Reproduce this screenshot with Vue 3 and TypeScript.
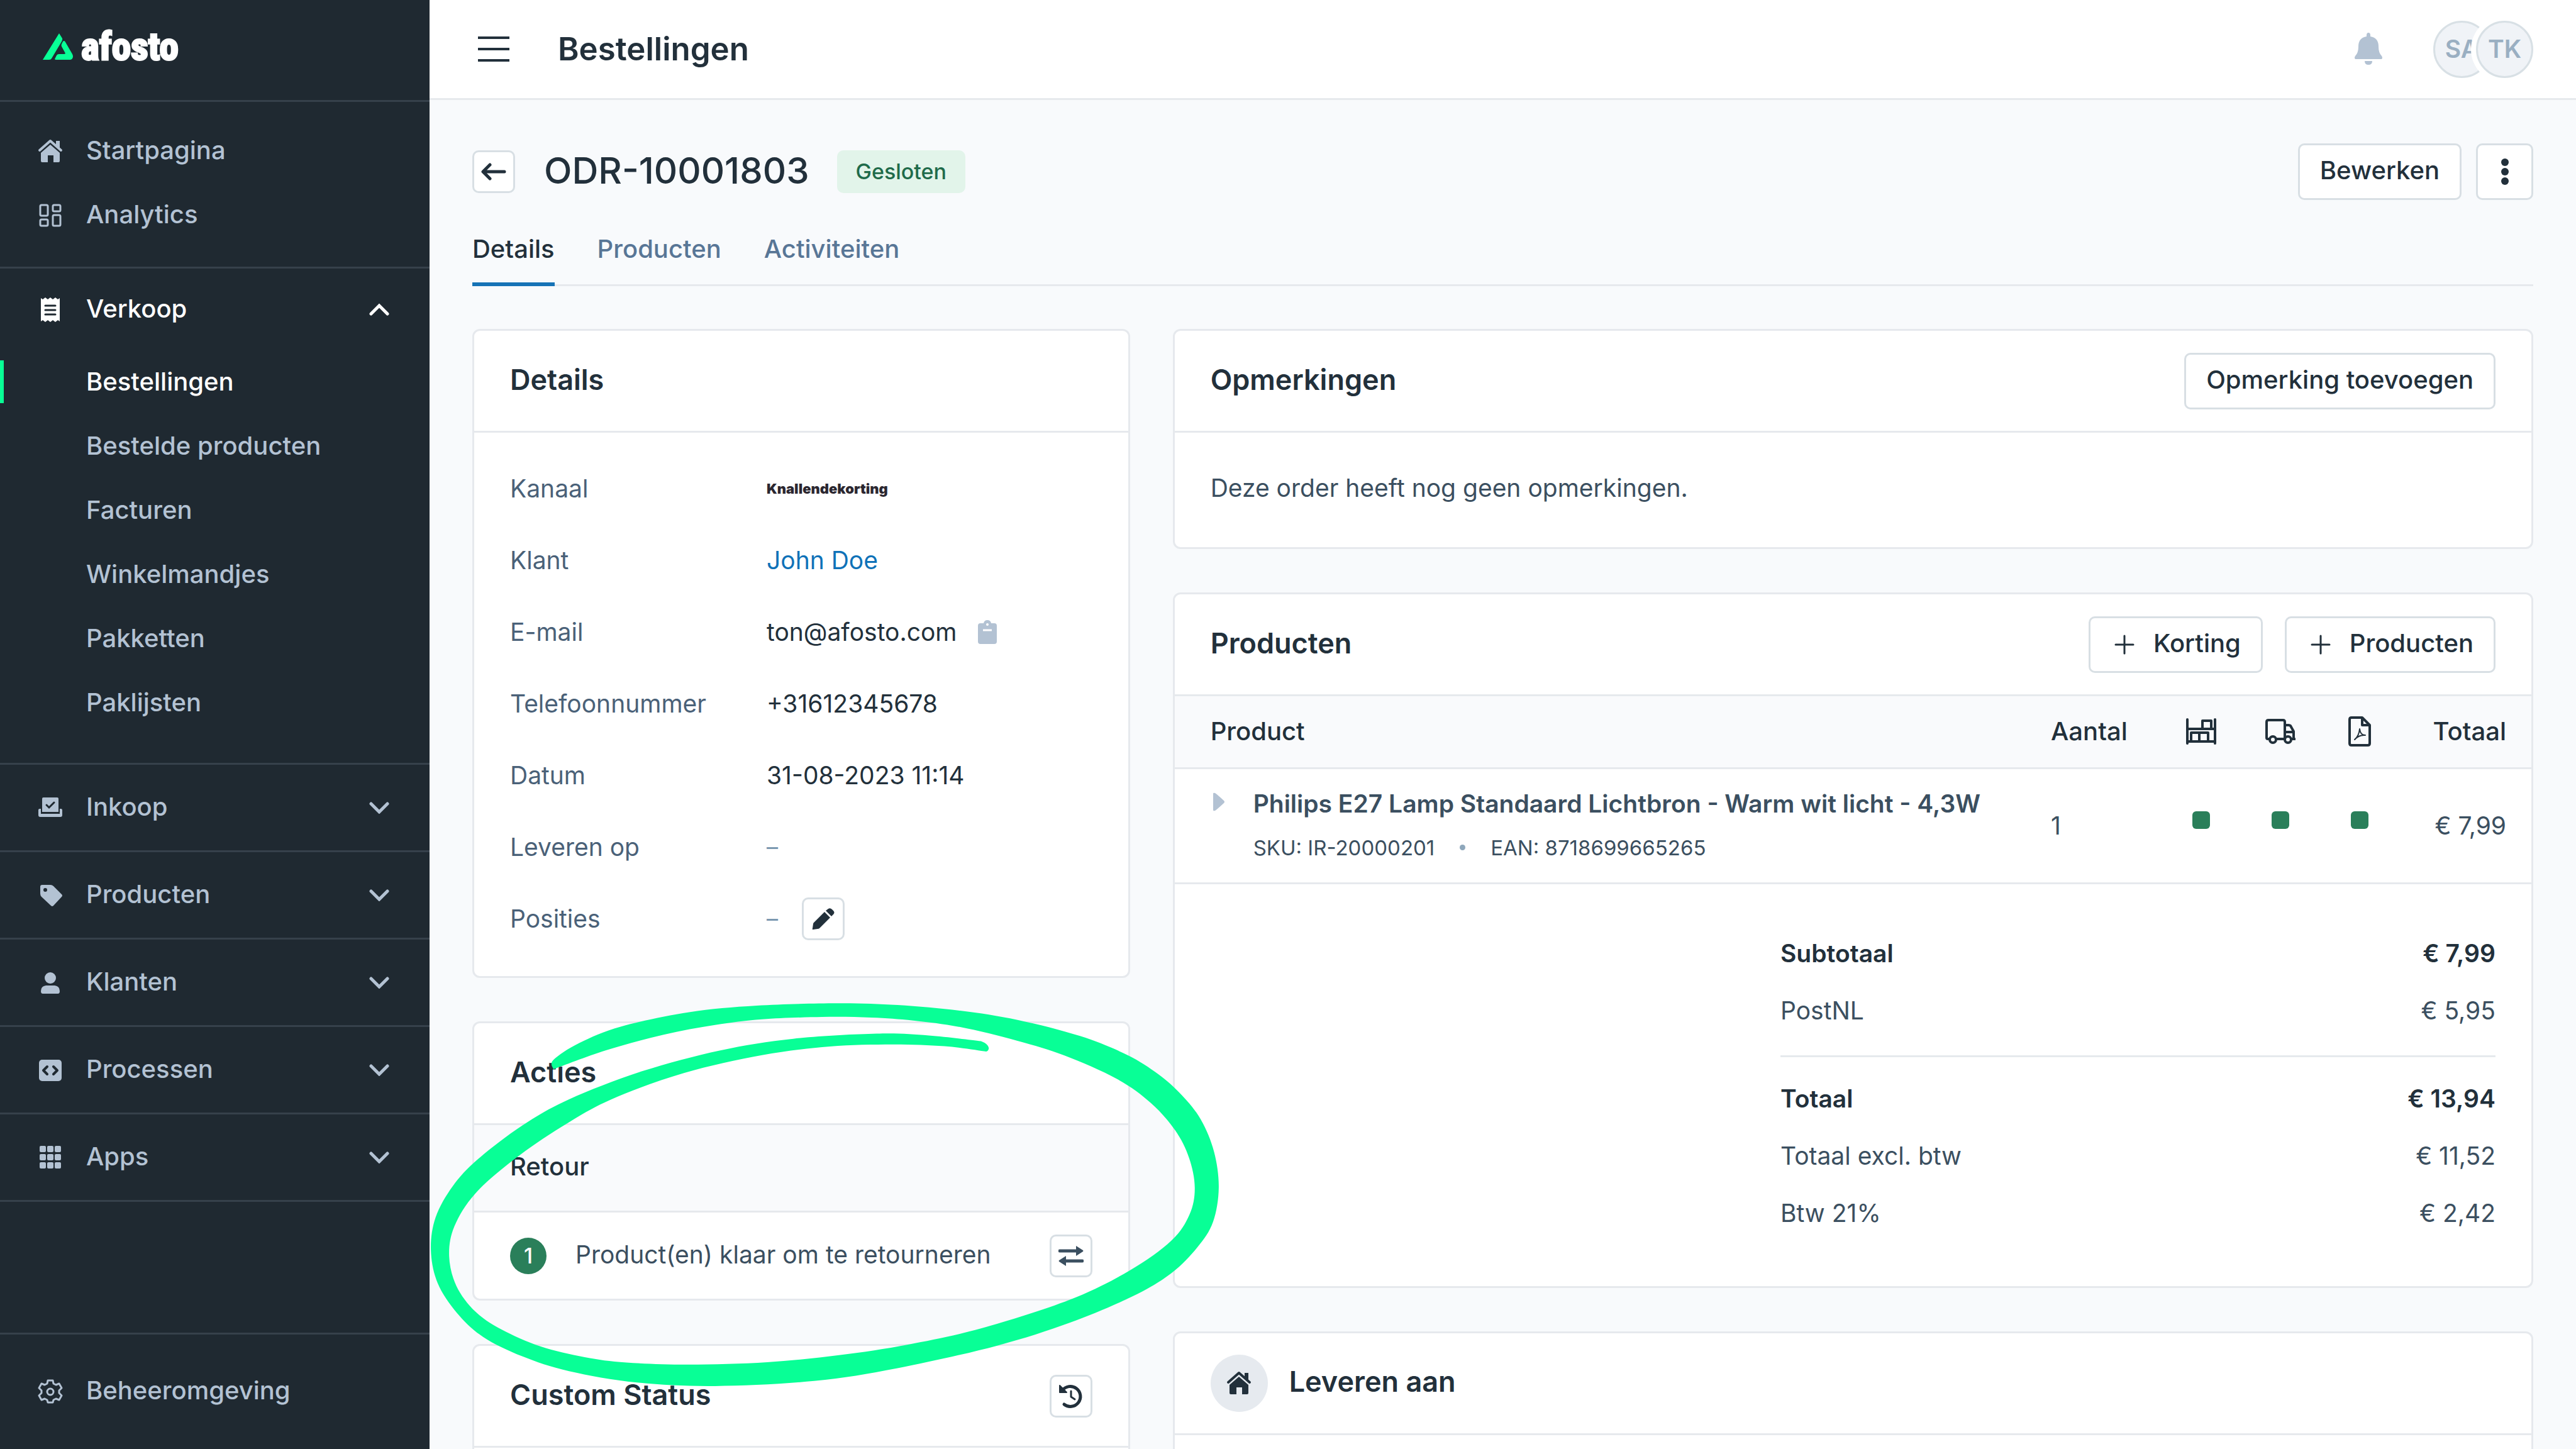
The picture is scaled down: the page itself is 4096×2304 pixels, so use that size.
<script setup lang="ts">
type Point = [number, number]

interface SubItem { label: string; active?: boolean }
interface Group { label: string; icon: string }
interface TotalRow { label: string; amount: string; strong?: boolean }

const salesItems: SubItem[] = [
  { label: 'Bestellingen', active: true },
  { label: 'Bestelde producten' },
  { label: 'Facturen' },
  { label: 'Winkelmandjes' },
  { label: 'Pakketten' },
  { label: 'Paklijsten' },
]

const groups: Group[] = [
  { label: 'Inkoop', icon: 'laptop' },
  { label: 'Producten', icon: 'tag' },
  { label: 'Klanten', icon: 'user' },
  { label: 'Processen', icon: 'code' },
  { label: 'Apps', icon: 'grid' },
]

const subtotals: TotalRow[] = [
  { label: 'Subtotaal', amount: '€ 7,99', strong: true },
  { label: 'PostNL', amount: '€ 5,95' },
]

const totals: TotalRow[] = [
  { label: 'Totaal', amount: '€ 13,94', strong: true },
  { label: 'Totaal excl. btw', amount: '€ 11,52' },
  { label: 'Btw 21%', amount: '€ 2,42' },
]

const gridCells: Point[] = [0, 1, 2].flatMap((r) => [0, 1, 2].map((c): Point => [3 + c * 12, 2 + r * 13]))

// Both edges of the hand-drawn marker stroke around the returns card.
const outerEdge: Point[] = [
  [240, 293], [240, 262], [290, 205], [370, 150], [500, 102], [630, 80], [785, 72], [900, 78], [1020, 97],
  [1130, 128], [1250, 182], [1340, 245], [1400, 310], [1445, 380], [1482, 463], [1507, 570], [1516, 690],
  [1505, 805], [1475, 890], [1425, 977], [1350, 1055], [1230, 1143], [1090, 1220], [900, 1295], [740, 1338],
  [550, 1355], [400, 1343], [270, 1305], [180, 1255], [105, 1190], [55, 1110], [18, 1010], [5, 900],
  [14, 790], [47, 685], [95, 595], [180, 482], [270, 394], [410, 300], [560, 230], [700, 191], [860, 174],
  [960, 180], [1060, 199],
]
const innerEdge: Point[] = [
  [1070, 234], [990, 216], [890, 210], [770, 217], [640, 246], [490, 306], [350, 395], [255, 487],
  [165, 595], [90, 710], [50, 820], [40, 920], [54, 1020], [90, 1105], [140, 1165], [215, 1222],
  [300, 1258], [380, 1276], [500, 1283], [650, 1275], [790, 1251], [920, 1216], [1060, 1162],
  [1230, 1066], [1345, 968], [1425, 868], [1460, 780], [1470, 690], [1459, 590], [1432, 497],
  [1385, 405], [1320, 325], [1220, 247], [1130, 198], [1020, 152], [930, 130], [850, 120], [755, 118],
  [640, 126], [550, 145], [450, 178], [340, 230], [240, 293],
]

function smooth(points: Point[]): string {
  let d = ''
  for (let i = 0; i < points.length - 1; i++) {
    const p0 = points[i - 1] ?? points[i]
    const p1 = points[i]
    const p2 = points[i + 1]
    const p3 = points[i + 2] ?? p2
    d += `C${p1[0] + (p2[0] - p0[0]) / 6} ${p1[1] + (p2[1] - p0[1]) / 6} `
    d += `${p2[0] - (p3[0] - p1[0]) / 6} ${p2[1] - (p3[1] - p1[1]) / 6} ${p2[0]} ${p2[1]}`
  }
  return d
}

const markerPath = `M240 293${smooth(outerEdge)}Q1074 208 1075 222Q1075 232 1070 234${smooth(innerEdge)}Z`
</script>

<template>
  <div class="shell">
    <aside class="sidebar">
      <a class="logo" href="#" aria-label="afosto">
        <svg width="50" height="44" viewBox="0 0 50 44" fill="#08ff96">
          <path d="M27 1L32 9Q33 11 31 14L15 41Q14 43 11 43H1Z" />
          <path d="M35 13Q36 13 37 15L48 34Q50 38 48 41Q47 43 43 43H22Q19 43 21 40L23 36Q24 34 27 34H35Q38 34 36 31L31 22Q30 20 31 18L33 14Q34 13 35 13Z" />
        </svg>
        <span>afosto</span>
      </a>

      <nav class="nav">
        <div class="block top">
          <a class="item" href="#">
            <svg class="icon" viewBox="0 0 40 40">
              <path d="M3 19L20 4L37 19" fill="none" stroke="currentColor" stroke-width="4" stroke-linecap="round" stroke-linejoin="round" />
              <path d="M29 4H35V16L29 11Z" fill="currentColor" />
              <path d="M20 10L35 23V36Q35 38 33 38H25V27H16V38H7Q5 38 5 36V23Z" fill="currentColor" />
            </svg>
            <span class="label">Startpagina</span>
          </a>
          <a class="item" href="#">
            <svg class="icon" viewBox="0 0 40 40" fill="none" stroke="currentColor" stroke-width="3">
              <rect x="4" y="4" width="12" height="17" rx="2" />
              <rect x="24" y="4" width="12" height="10" rx="2" />
              <rect x="4" y="27" width="12" height="10" rx="2" />
              <rect x="24" y="20" width="12" height="17" rx="2" />
            </svg>
            <span class="label">Analytics</span>
          </a>
        </div>

        <div class="block sales">
          <button class="group open" type="button" aria-expanded="true">
            <svg class="icon" viewBox="0 0 40 40">
              <path d="M5 2L8 4L12 1L16 4L20 1L24 4L28 1L32 4L35 2V39L32 37L28 40L24 37L20 40L16 37L12 40L8 37L5 39Z" fill="currentColor" />
              <path d="M12 14H28M12 21H28M12 28H28" stroke="#1f2931" stroke-width="3" stroke-linecap="round" />
            </svg>
            <span class="label">Verkoop</span>
            <svg class="chevron" viewBox="0 0 32 20"><path d="M3 17L16 4L29 17" /></svg>
          </button>
          <a v-for="item in salesItems" :key="item.label" class="sub" :class="{ active: item.active }" href="#">{{ item.label }}</a>
        </div>

        <div v-for="group in groups" :key="group.label" class="block">
          <button class="group" type="button" aria-expanded="false">
            <svg v-if="group.icon === 'laptop'" class="icon" viewBox="0 0 40 40">
              <path d="M9 4H31Q33 4 33 6V27H7V6Q7 4 9 4Z" fill="currentColor" />
              <path d="M14 16L18 20L26 12" fill="none" stroke="#1f2931" stroke-width="3" stroke-linecap="round" />
              <path d="M3 22H5V30H35V22H37Q39 22 39 24V32Q39 35 36 35H4Q1 35 1 32V24Q1 22 3 22Z" fill="currentColor" />
            </svg>
            <svg v-else-if="group.icon === 'tag'" class="icon" viewBox="0 0 40 40">
              <path fill-rule="evenodd" d="M7 4H20Q23 4 25 6L38 19Q40 21 38 23L25 37Q23 39 21 37L6 23Q4 21 4 18V7Q4 4 7 4ZM12 9A3 3 0 1 0 12 15A3 3 0 1 0 12 9Z" fill="currentColor" />
            </svg>
            <svg v-else-if="group.icon === 'user'" class="icon" viewBox="0 0 40 40" fill="currentColor">
              <circle cx="20" cy="13" r="9" />
              <path d="M13 25H27Q35 26 35 34Q35 38 32 38H8Q5 38 5 34Q5 26 13 25Z" />
            </svg>
            <svg v-else-if="group.icon === 'code'" class="icon" viewBox="0 0 40 40">
              <rect x="2" y="4" width="36" height="34" rx="5" fill="currentColor" />
              <path d="M15 15L9 21L15 27M25 15L31 21L25 27" fill="none" stroke="#1f2931" stroke-width="4" stroke-linecap="round" stroke-linejoin="round" />
            </svg>
            <svg v-else class="icon" viewBox="0 0 40 40" fill="currentColor">
              <rect v-for="(cell, i) in gridCells" :key="i" :x="cell[0]" :y="cell[1]" width="10" height="10" rx="2" />
            </svg>
            <span class="label">{{ group.label }}</span>
            <svg class="chevron" viewBox="0 0 32 20"><path d="M3 4L16 17L29 4" /></svg>
          </button>
        </div>
      </nav>

      <a class="item settings" href="#">
        <svg class="icon" viewBox="0 0 40 40" fill="none" stroke="currentColor" stroke-width="3" stroke-linejoin="round">
          <path d="M16 3H24L25 8L29 10L34 8L38 15L34 19V23L38 27L34 34L29 32L25 34L24 38H16L15 34L11 32L6 34L2 27L6 23V19L2 15L6 8L11 10L15 8Z" />
          <circle cx="20" cy="21" r="5" />
        </svg>
        <span class="label">Beheeromgeving</span>
      </a>
    </aside>

    <div class="main">
      <header class="topbar">
        <button class="menu" type="button" aria-label="Menu">
          <svg width="50" height="40" viewBox="0 0 50 40" stroke="currentColor" stroke-width="4"><path d="M0 2H50M0 20H50M0 38H50" /></svg>
        </button>
        <div class="page-title">Bestellingen</div>
        <button class="bell" type="button" aria-label="Meldingen">
          <svg width="46" height="52" viewBox="0 0 46 52" fill="currentColor">
            <path d="M23 0Q26 0 26 4V6Q39 8 39 22Q39 32 44 37Q46 40 44 42H2Q0 40 2 37Q7 32 7 22Q7 8 20 6V4Q20 0 23 0Z" />
            <path d="M17 45H29Q29 51 23 51Q17 51 17 45Z" />
          </svg>
        </button>
        <div class="avatars">
          <span class="avatar">SA</span>
          <span class="avatar front">TK</span>
        </div>
      </header>

      <main class="content">
        <div class="title-row">
          <button class="square" type="button" aria-label="Terug">
            <svg width="40" height="28" viewBox="0 0 40 28" class="line"><path d="M37 14H4M14 3L3 14L14 25" /></svg>
          </button>
          <h1>ODR-10001803</h1>
          <span class="badge">Gesloten</span>
          <div class="actions">
            <button class="btn" type="button">Bewerken</button>
            <button class="btn more" type="button" aria-label="Meer">
              <svg width="12" height="44" viewBox="0 0 12 44" fill="currentColor"><circle cx="6" cy="7" r="6" /><circle cx="6" cy="22" r="6" /><circle cx="6" cy="37" r="6" /></svg>
            </button>
          </div>
        </div>

        <nav class="tabs">
          <a class="tab current" href="#">Details</a>
          <a class="tab" href="#">Producten</a>
          <a class="tab" href="#">Activiteiten</a>
        </nav>

        <div class="columns">
          <div class="column">
            <section class="card">
              <div class="card-head"><h2>Details</h2></div>
              <dl class="facts">
                <div><dt>Kanaal</dt><dd><span class="brand">Knallendekorting</span></dd></div>
                <div><dt>Klant</dt><dd><a href="#">John Doe</a></dd></div>
                <div>
                  <dt>E-mail</dt>
                  <dd>
                    ton@afosto.com
                    <button class="copy" type="button" aria-label="Kopiëren">
                      <svg width="30" height="40" viewBox="0 0 30 40">
                        <path d="M4 6H9Q10 1 15 1Q20 1 21 6H26Q30 6 30 10V35Q30 39 26 39H4Q0 39 0 35V10Q0 6 4 6Z" fill="#b3c2d3" />
                        <circle cx="15" cy="8" r="2" fill="#fff" /><path d="M8 17H22" stroke="#fff" stroke-width="3" />
                      </svg>
                    </button>
                  </dd>
                </div>
                <div><dt>Telefoonnummer</dt><dd>+31612345678</dd></div>
                <div><dt>Datum</dt><dd>31-08-2023 11:14</dd></div>
                <div><dt>Leveren op</dt><dd><span class="none">–</span></dd></div>
                <div>
                  <dt>Posities</dt>
                  <dd>
                    <span class="none">–</span>
                    <button class="square edit" type="button" aria-label="Posities bewerken">
                      <svg width="40" height="40" viewBox="0 0 40 40" fill="currentColor">
                        <path d="M22 9L31 18L14 35Q13 36 11 36L4 37Q2 37 3 35L4 28Q4 27 5 26Z" />
                        <path d="M24 7L28 4Q31 2 34 5L36 7Q39 10 36 13L33 16Z" />
                      </svg>
                    </button>
                  </dd>
                </div>
              </dl>
            </section>

            <section class="card returns">
              <div class="card-head"><h2>Acties</h2></div>
              <h3 class="subhead">Retour</h3>
              <div class="task">
                <span class="count">1</span>
                <span class="task-text">Product(en) klaar om te retourneren</span>
                <button class="square" type="button" aria-label="Retourneren">
                  <svg width="40" height="34" viewBox="0 0 40 34">
                    <path d="M2 9H29M38 25H11" stroke="currentColor" stroke-width="5" stroke-linecap="round" />
                    <path d="M28 1L39 8Q40 9 39 10L28 17ZM12 17L1 24Q0 25 1 26L12 33Z" fill="currentColor" />
                  </svg>
                </button>
              </div>
              <svg class="marker" viewBox="0 0 1568 1568" preserveAspectRatio="none" aria-hidden="true"><path :d="markerPath" fill="#08ff96" /></svg>
            </section>

            <section class="card">
              <div class="card-head">
                <h2>Custom Status</h2>
                <button class="square" type="button" aria-label="Geschiedenis">
                  <svg width="40" height="40" viewBox="0 0 40 40" class="line">
                    <path d="M6 11A16 16 0 1 1 9 33" /><path d="M20 12V21L26 25" stroke-width="3" /><path d="M2 3V14H13Z" fill="currentColor" stroke-width="2" />
                  </svg>
                </button>
              </div>
              <div class="status-body"></div>
            </section>
          </div>

          <div class="column">
            <section class="card">
              <div class="card-head">
                <h2>Opmerkingen</h2>
                <button class="btn" type="button">Opmerking toevoegen</button>
              </div>
              <p class="empty">Deze order heeft nog geen opmerkingen.</p>
            </section>

            <section class="card">
              <div class="card-head">
                <h2>Producten</h2>
                <div class="head-buttons">
                  <button v-for="name in ['Korting', 'Producten']" :key="name" class="btn add" type="button">
                    <svg width="32" height="32" viewBox="0 0 32 32" stroke="currentColor" stroke-width="3" stroke-linecap="round"><path d="M2 16H30M16 2V30" /></svg>
                    <span>{{ name }}</span>
                  </button>
                </div>
              </div>
              <table class="lines">
                <colgroup><col /><col class="w-qty" /><col class="w-icon" /><col class="w-icon" /><col class="w-icon" /><col class="w-total" /></colgroup>
                <thead>
                  <tr>
                    <th class="first">Product</th>
                    <th>Aantal</th>
                    <th class="mid" aria-label="Magazijn">
                      <svg width="48" height="48" viewBox="0 -4 48 48" class="thin"><path d="M2 1V39M46 1V39M2 16H46M2 36H46M26 16V3H40V16M8 36V22H35V36M21 22V36" /></svg>
                    </th>
                    <th class="mid" aria-label="Verzending">
                      <svg width="48" height="48" viewBox="0 -4 48 48" class="thin">
                        <path d="M6 32H4Q2 32 2 30V5Q2 2 5 2H28Q31 2 31 5V32H18M31 10H37Q39 10 40 11L45 20V32H42M31 21H45M45 32H47" /><circle cx="12" cy="33" r="5" /><circle cx="36" cy="33" r="5" />
                      </svg>
                    </th>
                    <th class="mid" aria-label="Factuur">
                      <svg width="36" height="48" viewBox="0 0 36 48" class="thin">
                        <path d="M22 2H5Q2 2 2 5V43Q2 46 5 46H31Q34 46 34 43V14ZM22 2V14H34" /><path d="M10 37Q17 31 18 20Q19 30 27 30Q17 29 10 37Z" stroke-width="2" />
                      </svg>
                    </th>
                    <th class="last">Totaal</th>
                  </tr>
                </thead>
                <tbody>
                  <tr>
                    <td class="first">
                      <div class="product">
                        <button class="caret" type="button" aria-label="Uitklappen">
                          <svg width="20" height="30" viewBox="0 0 20 30" fill="#b3c2d3"><path d="M1 2Q1 0 4 1Q6 2 18 13Q20 15 18 17Q6 28 4 29Q1 30 1 28Z" /></svg>
                        </button>
                        <div>
                          <div class="product-name">Philips E27 Lamp Standaard Lichtbron - Warm wit licht - 4,3W</div>
                          <div class="codes"><span>SKU: IR-20000201</span><i></i><span>EAN: 8718699665265</span></div>
                        </div>
                      </div>
                    </td>
                    <td>1</td>
                    <td v-for="n in 3" :key="n" class="mid state"><i></i></td>
                    <td class="last">€ 7,99</td>
                  </tr>
                </tbody>
              </table>
              <div class="totals">
                <div v-for="row in subtotals" :key="row.label" class="sum" :class="{ strong: row.strong }"><span>{{ row.label }}</span><span>{{ row.amount }}</span></div>
                <hr />
                <div v-for="row in totals" :key="row.label" class="sum" :class="{ strong: row.strong }"><span>{{ row.label }}</span><span>{{ row.amount }}</span></div>
              </div>
            </section>

            <section class="card">
              <div class="card-head deliver">
                <span class="round">
                  <svg class="icon" viewBox="0 0 40 40">
                    <path d="M3 19L20 4L37 19" fill="none" stroke="currentColor" stroke-width="4" stroke-linecap="round" stroke-linejoin="round" />
                    <path d="M29 4H35V16L29 11Z" fill="currentColor" />
                    <path d="M20 10L35 23V36Q35 38 33 38H25V27H16V38H7Q5 38 5 36V23Z" fill="currentColor" />
                  </svg>
                </span>
                <h2>Leveren aan</h2>
              </div>
              <div class="status-body"></div>
            </section>
          </div>
        </div>
      </main>
    </div>
  </div>
</template>

<style>
body { margin: 0; background: #f8fafc; }
</style>

<style scoped>
.shell, .shell * { box-sizing: border-box; }
.shell {
  display: flex;
  height: 100vh;
  overflow: hidden;
  font-family: Inter, "Liberation Sans", sans-serif;
  font-size: 39px;
  line-height: 56px;
  color: #22303b;
}
svg { display: block; flex: none; }
a { color: inherit; text-decoration: none; }
button { margin: 0; padding: 0; border: 0; background: none; color: inherit; font: inherit; }
h1, h2, h3, p, dl, dd { margin: 0; }

.sidebar { flex: none; width: 683px; display: flex; flex-direction: column; background: #1f2931; color: #b3c2d3; font-size: 40px; font-weight: 500; }
.logo {
  display: flex;
  align-items: center;
  gap: 12px;
  height: 162px;
  padding: 0 0 12px 67px;
  border-bottom: 3px solid #36414b;
  color: #fff;
  font-family: "Liberation Sans Narrow", "Roboto Condensed", "Liberation Sans", sans-serif;
  font-size: 61px;
  font-weight: 700;
  -webkit-text-stroke: 3px #fff;
}
.nav { flex: 1; }
.block { border-bottom: 3px solid #36414b; }
.top { padding: 27px 0 31px; }
.sales { padding-bottom: 45px; }
.item, .group { display: flex; align-items: center; width: 100%; padding: 0 60px; text-align: left; }
.item { height: 102px; }
.group { height: 136px; }
.group.open { height: 129px; color: #fff; }
.icon { width: 40px; height: 40px; }
.label { flex: 1; padding: 0 0 2px 37px; }
.chevron { width: 32px; height: 20px; margin-right: 4px; fill: none; stroke: currentColor; stroke-width: 5; stroke-linecap: round; }
.sub { display: flex; align-items: center; height: 102px; padding-left: 137px; }
.sub.active { color: #fff; background: linear-gradient(#08ff96, #08ff96) left / 6px 68px no-repeat; }
.settings { height: 185px; padding-bottom: 2px; border-top: 3px solid #36414b; }

.main { flex: 1; min-width: 0; }
.topbar { display: flex; align-items: center; height: 159px; padding: 0 68px; border-bottom: 3px solid #e6e9ed; background: #fff; }
.menu { display: flex; justify-content: center; width: 68px; }
.page-title { flex: 1; margin-left: 68px; font-size: 51px; font-weight: 600; }
.bell { color: #b3c2d3; margin-right: 80px; }
.avatars { display: flex; }
.avatar {
  display: flex;
  align-items: center;
  justify-content: center;
  width: 91px;
  height: 91px;
  border: 3px solid #d8e0e5;
  border-radius: 50%;
  background: #f0f3f7;
  color: #9aafc2;
  font-weight: 600;
}
.avatar.front { margin-left: -23px; box-shadow: 0 0 0 8px #fff; }

.content { padding: 69px 68px 0; }
.title-row { display: flex; align-items: center; height: 90px; }
.square { display: flex; align-items: center; justify-content: center; flex: none; width: 68px; height: 68px; border: 3px solid #d8dfe4; border-radius: 10px; background: #fff; }
.line { fill: none; stroke: currentColor; stroke-width: 5; stroke-linecap: round; stroke-linejoin: round; }
.thin { fill: none; stroke: currentColor; stroke-width: 4; stroke-linecap: round; stroke-linejoin: round; }
h1 { margin-left: 46px; padding-bottom: 4px; font-size: 58px; font-weight: 500; }
.badge { margin-left: 44px; padding: 0 30px; border-radius: 10px; background: #e2f4ea; color: #1f6b4a; font-size: 34px; font-weight: 500; line-height: 68px; }
.actions { display: flex; gap: 23px; margin-left: auto; }
.btn { height: 90px; padding: 0 32px 4px; border: 3px solid #d8dfe4; border-radius: 10px; background: #fff; font-size: 40px; font-weight: 500; }
.more { display: flex; align-items: center; justify-content: center; width: 91px; padding: 0; }
.tabs { display: flex; gap: 68px; margin-bottom: 68px; box-shadow: inset 0 -3px #e6e9ed; color: #587696; font-size: 40px; font-weight: 500; }
.tab { padding: 50px 0 25px; border-bottom: 6px solid transparent; }
.tab.current { border-color: #1673b6; color: #22303b; }

.columns { display: grid; grid-template-columns: minmax(0, 29fr) minmax(0, 60fr); gap: 68px; }
.column { display: flex; flex-direction: column; gap: 69px; }
.card { border: 3px solid #e6e9ed; border-radius: 12px; background: #fff; }
.card-head { display: flex; align-items: center; justify-content: space-between; height: 162px; padding: 0 57px; border-bottom: 3px solid #e6e9ed; }
h2 { padding-bottom: 4px; font-size: 45px; font-weight: 600; }
.facts { padding: 32px 57px 34px; }
.facts div { display: flex; align-items: center; height: 114px; }
dt { width: 408px; color: #4a6178; }
dd { display: flex; align-items: center; }
dd a { color: #0f72b8; }
.brand { font-size: 22px; font-weight: 900; color: #2b2730; }
.copy { margin-left: 34px; }
.none { color: #7b98b0; font-size: 36px; }
.edit { margin-left: 38px; }
.returns { position: relative; }
.subhead { height: 139px; padding: 0 57px; border-bottom: 3px solid #e6e9ed; background: #f9fafc; font-size: 40px; font-weight: 500; line-height: 132px; }
.task { display: flex; align-items: center; height: 137px; padding: 0 57px; color: #3b4f60; }
.count { width: 58px; height: 58px; border-radius: 50%; background: #2a7f5a; color: #fff; font-size: 34px; font-weight: 500; line-height: 58px; text-align: center; }
.task-text { flex: 1; margin-left: 46px; padding-bottom: 4px; white-space: nowrap; }
.marker { position: absolute; z-index: 2; left: -73px; top: -66px; width: 1300px; height: 744px; pointer-events: none; }
.status-body { height: 160px; }

.empty { padding: 60px 57px 66px; color: #3b4f60; }
.head-buttons { display: flex; gap: 35px; }
.add { display: flex; align-items: center; gap: 30px; padding: 0 32px 0 38px; }
.add span { padding-bottom: 4px; }
.lines { width: 100%; border-collapse: collapse; table-layout: fixed; color: #3b4f60; }
.w-qty { width: 176px; }
.w-icon { width: 126px; }
.w-total { width: 210px; }
th, td { padding: 0; text-align: left; border-bottom: 3px solid #e6e9ed; }
th { height: 114px; background: #f9fafc; color: #22303b; font-size: 40px; font-weight: 500; }
td { height: 183px; }
.first { padding-left: 57px; }
.mid svg, .mid i { margin: 0 auto; }
.last { padding-right: 40px; text-align: right; }
.state { padding-bottom: 18px; }
.state i { display: block; width: 28px; height: 28px; border-radius: 6px; background: #2a7f5a; }
.product { display: flex; align-items: flex-start; line-height: 70px; white-space: nowrap; }
.caret { width: 68px; padding: 17px 0 0 3px; }
.product-name { font-weight: 600; }
.codes { display: flex; align-items: center; font-size: 33px; }
.codes i { width: 9px; height: 9px; margin: 0 40px; border-radius: 50%; background: #8ea7bb; }
.totals { width: 1194px; margin-left: auto; padding: 64px 57px 71px 0; color: #3b4f60; }
.sum { display: flex; justify-content: space-between; line-height: 91px; }
.sum.strong { color: #22303b; font-weight: 600; }
hr { height: 3px; margin: 26px 0 20px; border: 0; background: #e6e9ed; }
.deliver { justify-content: flex-start; gap: 34px; }
.round { display: flex; align-items: center; justify-content: center; width: 91px; height: 91px; border-radius: 50%; background: #e6eaef; }
</style>
